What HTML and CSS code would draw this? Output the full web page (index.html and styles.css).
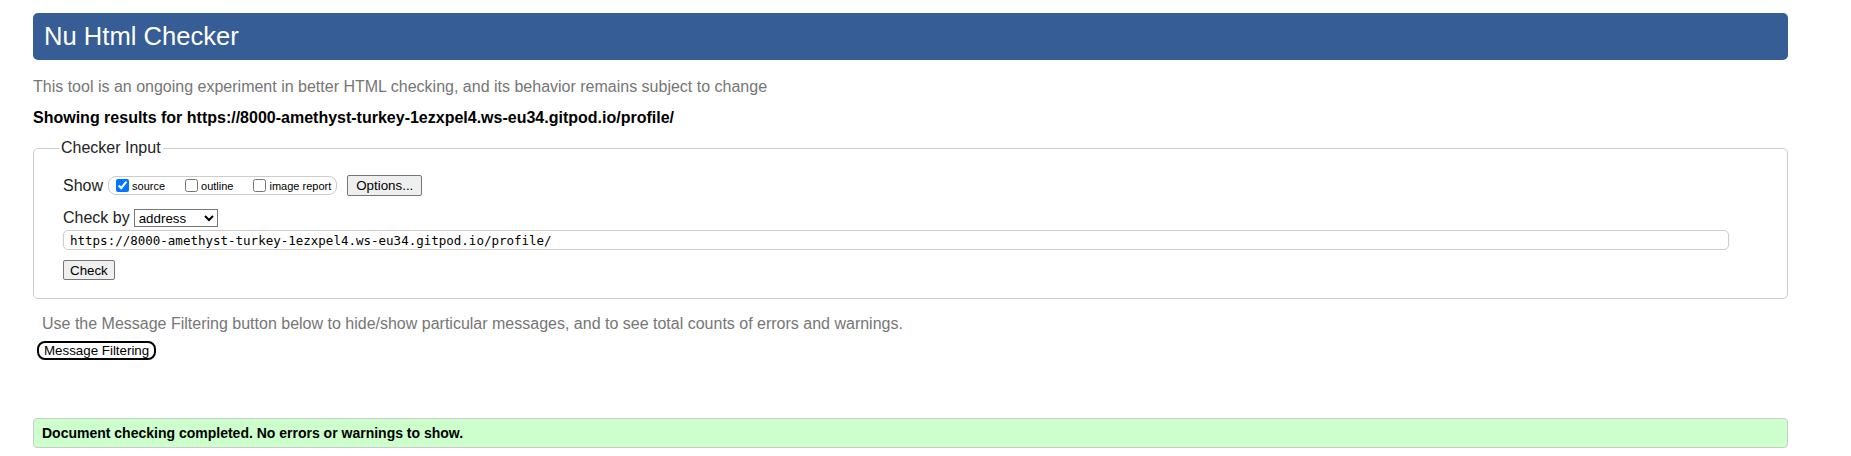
FILE: index.html
```html
<!DOCTYPE html>
<html lang="en">
<head>
<meta charset="utf-8">
<title>Nu Html Checker</title>
<link rel="stylesheet" href="styles.css">
</head>
<body>
<div class="page">
  <h1 class="banner">Nu Html Checker</h1>
  <p class="intro">This tool is an ongoing experiment in better HTML checking, and its behavior remains subject to change</p>
  <p class="results-for">Showing results for https://8000-amethyst-turkey-1ezxpel4.ws-eu34.gitpod.io/profile/</p>
  <form class="checker-form">
    <fieldset class="checker">
      <legend class="checker-legend">Checker Input</legend>
      <div class="row show-row">
        <span class="row-label">Show</span>
        <span class="show-opts">
          <label class="opt"><input type="checkbox" checked><span>source</span></label>
          <label class="opt"><input type="checkbox"><span>outline</span></label>
          <label class="opt"><input type="checkbox"><span>image report</span></label>
        </span>
        <button type="button" class="btn opt-btn">Options...</button>
      </div>
      <div class="row by-row">
        <span class="row-label">Check by</span>
        <select class="by-select"><option>address</option></select>
      </div>
      <div class="row url-row">
        <input class="url" type="url" value="https://8000-amethyst-turkey-1ezxpel4.ws-eu34.gitpod.io/profile/">
      </div>
      <div class="row submit-row">
        <button type="button" class="btn">Check</button>
      </div>
    </fieldset>
  </form>
  <p class="filter-note">Use the Message Filtering button below to hide/show particular messages, and to see total counts of errors and warnings.</p>
  <button type="button" class="mf-btn">Message Filtering</button>
  <div class="success">Document checking completed. No errors or warnings to show.</div>
</div>
</body>
</html>
```
FILE: styles.css
```css
html, body {
  margin: 0;
  padding: 0;
  background: #fff;
}

body {
  font-family: "Liberation Sans", Arial, sans-serif;
  font-size: 16px;
  color: #000;
}

.page {
  padding: 13px 63px 0 33px;
}

.banner {
  margin: 0;
  height: 47px;
  display: flex;
  align-items: center;
  padding: 0 11px;
  background: #365d95;
  color: #fff;
  font-weight: normal;
  font-size: 25.6px;
  border-radius: 5px;
}

.intro {
  margin: 18px 0 0;
  line-height: 18px;
  color: #767676;
}

.results-for {
  margin: 13px 0 0;
  line-height: 18px;
  font-weight: bold;
}

.checker-form {
  margin: 12px 0 0;
}

.checker {
  margin: 0;
  border: 1px solid #cccccc;
  border-radius: 5px;
  padding: 18px 29px 18px 29px;
  min-width: 0;
}

.checker-legend {
  margin-left: -4px;
  padding: 0 2px;
  line-height: 18px;
  color: #222;
}

.row {
  display: flex;
  align-items: center;
}

.row-label {
  color: #222;
  margin-right: 4px;
}

.show-row {
  height: 21px;
}

.show-opts {
  display: flex;
  align-items: center;
  height: 17px;
  border: 1px solid #cccccc;
  border-radius: 8px;
  padding: 0 5px 0 3px;
  margin-left: 1px;
  margin-right: 10px;
}

.opt {
  display: flex;
  align-items: center;
  font-size: 11px;
  color: #000;
  margin-right: 16px;
}

.opt:last-child {
  margin-right: 0;
}

.opt input {
  margin: 0 3px 0 4px;
  width: 13px;
  height: 13px;
}

.btn {
  font-family: "Liberation Sans", Arial, sans-serif;
  font-size: 13.33px;
  color: #000;
  background: #efefef;
  border: 1px solid #767676;
  border-radius: 2px;
  padding: 0 6px;
  height: 21px;
}

.opt-btn {
  padding: 0 8px;
}

.by-row {
  margin-top: 13px;
  height: 18px;
}

.by-select {
  font-family: "Liberation Sans", Arial, sans-serif;
  font-size: 13.33px;
  color: #000;
  width: 84px;
  height: 18px;
  border: 1px solid #767676;
  border-radius: 0;
  background: #fff;
}

.url-row {
  margin-top: 3px;
}

.url {
  width: 1666px;
  height: 20px;
  box-sizing: border-box;
  border: 1px solid #cccccc;
  border-radius: 5px;
  padding: 0 6px;
  font-family: "DejaVu Sans Mono", "Liberation Mono", monospace;
  font-size: 12.5px;
  color: #000;
}

.submit-row {
  margin-top: 10px;
}

.submit-row .btn {
  height: 20px;
}

.filter-note {
  margin: 16px 0 0 9px;
  line-height: 18px;
  color: #767676;
}

.mf-btn {
  display: block;
  margin: 8px 0 0 4px;
  font-family: "Liberation Sans", Arial, sans-serif;
  font-size: 13.33px;
  line-height: 14px;
  color: #000;
  background: #fff;
  border: 2px solid #000;
  border-radius: 8px;
  padding: 0 5px;
  height: 19px;
}

.success {
  margin-top: 58px;
  height: 30px;
  box-sizing: border-box;
  display: flex;
  align-items: center;
  padding: 0 8px;
  background: #ccffcc;
  border: 1px solid #cccccc;
  border-radius: 4px;
  font-weight: bold;
  font-size: 14px;
}
```
